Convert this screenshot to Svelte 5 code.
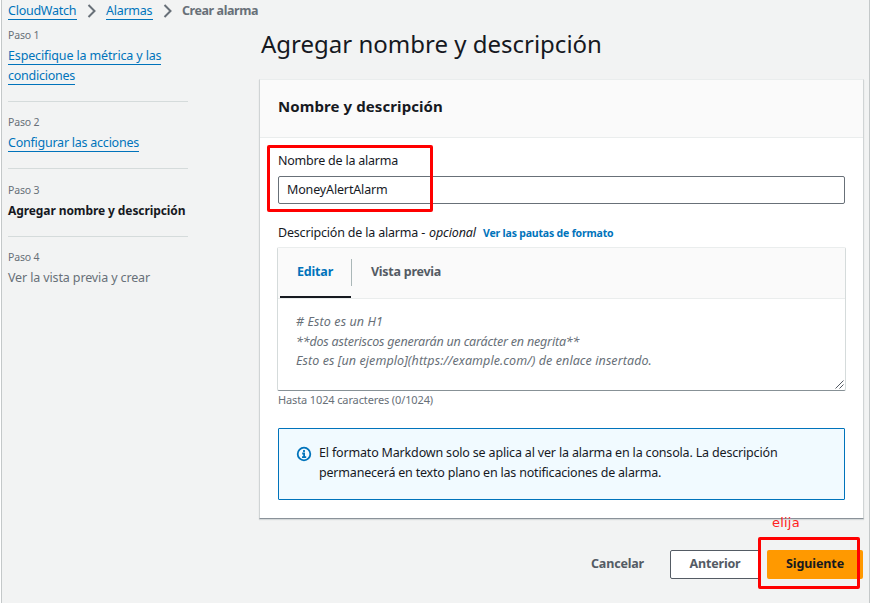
<script>
  let name = $state('MoneyAlertAlarm');
</script>

<div class="page">
  <div class="console">
    <nav class="crumbs">
      <a class="link cw" href="#cloudwatch">CloudWatch</a>
      <svg class="chev" viewBox="0 0 10 14"><path d="M1.5 1 7.5 7l-6 6" /></svg>
      <a class="link al" href="#alarmas">Alarmas</a>
      <svg class="chev" viewBox="0 0 10 14"><path d="M1.5 1 7.5 7l-6 6" /></svg>
      <span class="here">Crear alarma</span>
    </nav>

    <div class="columns">
      <aside>
        <div class="step">
          <small>Paso 1</small>
          <div><a class="link s1a" href="#paso1">Especifique la métrica y las<br /><span class="s1b">condiciones</span></a></div>
        </div>
        <div class="step">
          <small>Paso 2</small>
          <div><a class="link s2" href="#paso2">Configurar las acciones</a></div>
        </div>
        <div class="step">
          <small>Paso 3</small>
          <div class="current">Agregar nombre y descripción</div>
        </div>
        <div class="step">
          <small>Paso 4</small>
          <div class="pending">Ver la vista previa y crear</div>
        </div>
      </aside>

      <main>
        <h1>Agregar nombre y descripción</h1>
        <section class="card">
          <header><h2>Nombre y descripción</h2></header>
          <div class="body">
            <label class="name" for="alarm">Nombre de la alarma</label>
            <input id="alarm" bind:value={name} />
            <div class="desc">
              <span class="desctext">Descripción de la alarma -</span><em>opcional</em><a href="#formato">Ver las pautas de formato</a>
            </div>
            <div class="editor">
              <div class="tabs">
                <div class="tab active">Editar</div>
                <div class="sep"></div>
                <div class="tab preview">Vista previa</div>
              </div>
              <div class="area">
                <div class="l1"># Esto es un H1</div>
                <div class="l2">**dos asteriscos generarán un carácter en negrita**</div>
                <div class="l3">Esto es [un ejemplo](https://example.com/) de enlace insertado.</div>
                <svg class="grip" viewBox="0 0 9 9"><path d="M.5 8.5l8-8M4.5 8.5l4-4" /></svg>
              </div>
            </div>
            <div class="hint">Hasta 1024 caracteres (0/1024)</div>
            <div class="alert">
              <svg class="info" viewBox="0 0 16 16">
                <circle cx="8" cy="8" r="6.3" />
                <path d="M8 4v2M6.2 7.5H8.1V11M6 11.2h4.2" />
              </svg>
              <div>
                <div class="a1">El formato Markdown solo se aplica al ver la alarma en la consola. La descripción</div>
                <div class="a2">permanecerá en texto plano en las notificaciones de alarma.</div>
              </div>
            </div>
          </div>
        </section>
        <div class="actions">
          <button class="cancel">Cancelar</button>
          <button class="prev">Anterior</button>
          <button class="next">Siguiente</button>
        </div>
      </main>
    </div>
  </div>

  <div class="mark field-mark"></div>
  <div class="mark next-mark"></div>
  <div class="note">elija</div>
</div>

<style>
  :global(body) { background: #fff; overflow: hidden; }
  .page {
    position: relative; width: 874px; height: 603px; box-sizing: border-box;
    padding: 0 4px 0 1px; overflow: hidden; background: #fff;
    font: 12.5px/20px "Noto Sans", "Open Sans", sans-serif; color: #16191f;
  }
  .console {
    box-sizing: border-box; height: 603px; background: #f2f3f3;
    border-left: 1px solid #c4c8c9; border-right: 1px solid #c4c8c9; padding-left: 6px;
  }
  .link { color: #0073bb; text-decoration: none; border-bottom: 1px solid #0073bb; line-height: 16px; }
  .crumbs { display: flex; align-items: center; height: 25px; box-sizing: border-box; padding-bottom: 3px; white-space: nowrap; }
  .crumbs .link { height: 16px; }
  .cw { width: 69px; letter-spacing: -.25px; }
  .al { width: 47px; letter-spacing: -.28px; }
  .here { color: #687078; font-weight: 700; letter-spacing: -.43px; }
  .chev { width: 10px; height: 14px; margin: 0 9px 0 10px; fill: none; stroke: #687078; stroke-width: 2; }
  .columns { display: flex; }
  aside { width: 180px; flex: none; white-space: nowrap; }
  .step { padding-bottom: 15px; }
  .step + .step { border-top: 1px solid #d5dbdb; padding-top: 10px; padding-bottom: 15px; }
  .step:nth-child(3) { padding-bottom: 15px; }
  .step:nth-child(3), .step:nth-child(4) { padding-top: 11px; }
  .step:last-child { padding-top: 10px; padding-bottom: 0; }
  .step > div { padding-top: 1px; }
  small { display: block; font-size: 10.5px; letter-spacing: -.15px; color: #687078; }
  .s1a { letter-spacing: -.14px; }
  .s1b { letter-spacing: -.25px; }
  .s2 { letter-spacing: -.24px; }
  .step .link { line-height: 20px; }
  .current { font-size: 12px; font-weight: 700; letter-spacing: -.09px; }
  .pending { color: #687078; letter-spacing: -.13px; }
  main { margin-left: 71px; width: 605px; }
  h1 { margin: 0; padding: 2px 0 0 2px; height: 52px; font-size: 24px; line-height: 34px; font-weight: 400; white-space: nowrap; }
  .card {
    box-sizing: border-box; height: 440px; background: #fff;
    border: 1px solid #d0d4d5; border-top-color: #eaeded; border-bottom-color: #8a9299;
    box-shadow: 0 1px 1px rgba(0, 28, 36, .12);
  }
  .card header { height: 57px; background: #fafafa; border-bottom: 1px solid #eaeded; padding-left: 18px; }
  h2 { margin: 0; padding-top: 14px; font-size: 15px; line-height: 24px; letter-spacing: .09px; }
  .body { padding: 13px 17px 0 18px; white-space: nowrap; }
  .name { display: block; letter-spacing: -.22px; }
  input {
    display: block; box-sizing: border-box; width: 567px; height: 28px; margin-top: 5px; padding: 0 8px 1px;
    border: 1px solid #687078; border-radius: 2px; background: #fff; color: #16191f;
    font: inherit; letter-spacing: -.15px; outline: none;
  }
  .desc { display: flex; margin-top: 19px; align-items: baseline; }
  .desctext { width: 151px; letter-spacing: -.185px; }
  .desc em { width: 54px; letter-spacing: -.1px; }
  .desc a { color: #0073bb; font-size: 10.5px; font-weight: 700; letter-spacing: -.18px; text-decoration: none; }
  .editor {
    box-sizing: border-box; width: 569px; height: 144px; margin: 4px 0 0 -1px; border: 1px solid #d5dbdb;
    border-top-color: #eaeded; border-bottom-color: #879196; border-radius: 2px;
  }
  .tabs { display: flex; height: 50px; background: #fafafa; border-bottom: 1px solid #eaeded; }
  .tab { box-sizing: border-box; height: 50px; padding-top: 14px; font-weight: 700; color: #545b64; }
  .active { width: 71px; margin-left: 2px; padding-left: 17px; color: #0073bb; letter-spacing: -.18px; border-bottom: 2px solid #16191f; }
  .sep { width: 1px; height: 27px; margin: 11px 19px 0 0; background: #aab7b8; }
  .preview { letter-spacing: -.26px; }
  .area { position: relative; height: 91px; box-sizing: border-box; padding: 13px 0 0 18px; line-height: 19.5px; font-style: italic; color: #687078; }
  .l1 { letter-spacing: .1px; }
  .l2 { letter-spacing: -.19px; line-height: 19px; }
  .l3 { letter-spacing: .08px; line-height: 20px; }
  .grip { position: absolute; right: 1px; bottom: 1px; width: 9px; height: 9px; fill: none; stroke: #545b64; stroke-width: 1; }
  .hint { font-size: 11px; line-height: 18px; letter-spacing: -.128px; color: #687078; }
  .alert {
    display: flex; box-sizing: border-box; width: 567px; height: 72px; margin-top: 19px; padding: 14px 0 0 17px;
    border: 1px solid #0073bb; border-radius: 1px; background: #f1faff;
  }
  .info { width: 16px; height: 16px; margin: 3px 7px 0 0; fill: none; stroke: #0073bb; stroke-width: 1.8; }
  .a1 { letter-spacing: -.17px; }
  .a2 { letter-spacing: -.195px; }
  .actions { display: flex; justify-content: flex-end; margin-top: 31px; padding-right: 1px; }
  button {
    box-sizing: border-box; height: 29px; margin: 0; padding: 0 0 2px; border: 1px solid transparent; border-radius: 2px;
    background: transparent; color: #545b64; font: 700 12.5px/20px "Noto Sans", "Open Sans", sans-serif;
  }
  .cancel { width: 93px; margin-right: 6px; letter-spacing: -.17px; }
  .prev { width: 90px; margin-right: 7px; border-color: #545b64; background: #fff; letter-spacing: -.175px; }
  .next { width: 96px; background: #ff9900; color: #16191f; letter-spacing: -.09px; }
  .mark { position: absolute; box-sizing: border-box; border: 3px solid #f00; border-radius: 2px; }
  .field-mark { left: 267px; top: 145px; width: 166px; height: 67px; }
  .next-mark { left: 758px; top: 537px; width: 102px; height: 52px; }
  .note { position: absolute; left: 772px; top: 513px; font: 13px/20px "DejaVu Sans", sans-serif; color: #f22; letter-spacing: .2px; }
</style>
